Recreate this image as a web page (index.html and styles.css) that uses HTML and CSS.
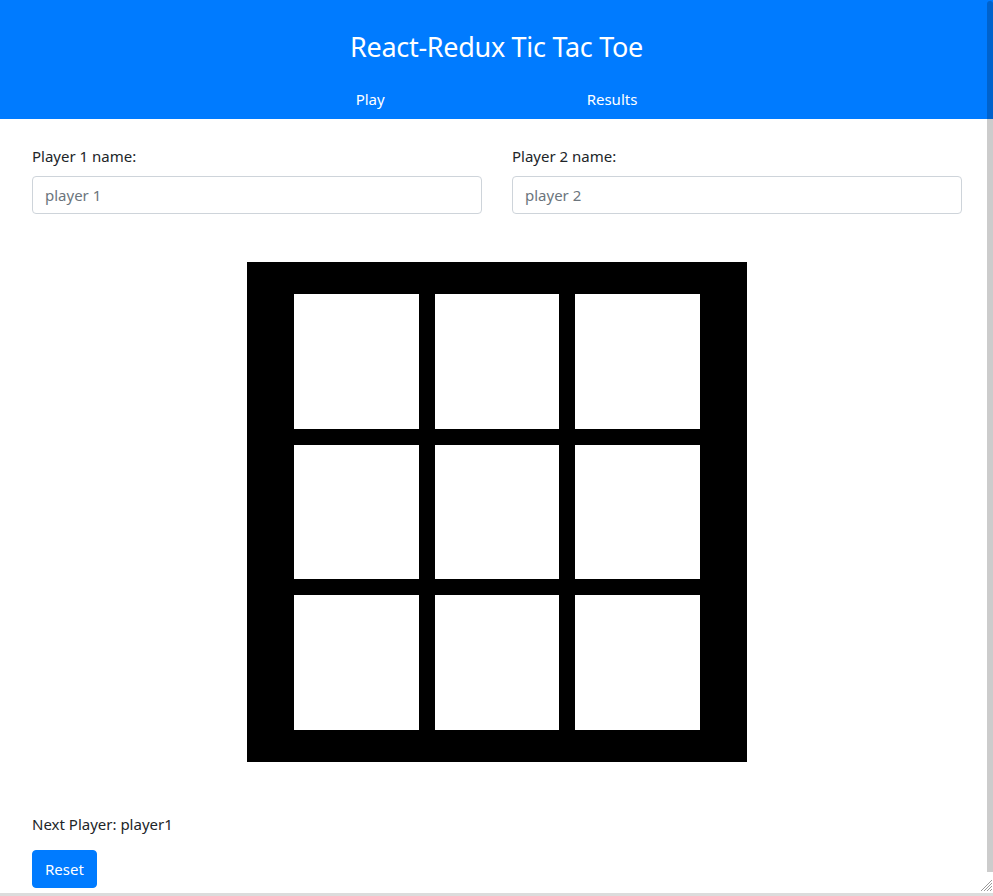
FILE: index.html
```html
<!DOCTYPE html>
<html lang="en">
<head>
<meta charset="utf-8">
<title>React-Redux Tic Tac Toe</title>
<link rel="stylesheet" href="styles.css">
</head>
<body>
<header class="app-header">
  <h1 class="app-title">React-Redux Tic Tac Toe</h1>
  <nav class="app-nav">
    <a class="nav-link" href="#">Play</a>
    <a class="nav-link" href="#">Results</a>
  </nav>
</header>
<main class="content">
  <div class="players">
    <div class="form-group">
      <label class="form-label" for="p1">Player 1 name:</label>
      <input class="form-control" id="p1" type="text" placeholder="player 1">
    </div>
    <div class="form-group">
      <label class="form-label" for="p2">Player 2 name:</label>
      <input class="form-control" id="p2" type="text" placeholder="player 2">
    </div>
  </div>
  <div class="board-wrap">
    <div class="board">
      <div class="cell"></div><div class="cell"></div><div class="cell"></div>
      <div class="cell"></div><div class="cell"></div><div class="cell"></div>
      <div class="cell"></div><div class="cell"></div><div class="cell"></div>
    </div>
  </div>
  <p class="next-player">Next Player: player1</p>
  <button class="btn-primary" type="button">Reset</button>
</main>
<div class="scroll-thumb"></div>
<div class="resize-grip">
  <svg width="12" height="12" viewBox="0 0 12 12"><path d="M11 3 L3 11 M11 6 L6 11 M11 9 L9 11 M11 0 L0 11" stroke="#9a9a9a" stroke-width="1" fill="none"/></svg>
</div>
<div class="bottom-strip"></div>
</body>
</html>
```

FILE: styles.css
```css
* { box-sizing: border-box; }
html, body { margin: 0; padding: 0; }
body {
  font-family: "Noto Sans", "Open Sans", "Liberation Sans", sans-serif;
  font-size: 16px;
  line-height: 1.5;
  color: #212529;
  background: #fff;
  overflow: hidden;
  height: 896px;
}
.app-header {
  background: #007bff;
  color: #fff;
  height: 119px;
  padding-top: 31px;
  text-align: center;
}
.app-title {
  margin: 0;
  font-size: 27px;
  font-weight: 400;
  line-height: 1.2;
  letter-spacing: -0.3px;
}
.app-nav {
  display: flex;
  justify-content: center;
  gap: 202px;
  margin-top: 24px;
}
.nav-link {
  color: #fff;
  text-decoration: none;
  font-size: 15px;
  line-height: 24px;
}
.content {
  padding: 0 31px 0 32px;
}
.players {
  display: grid;
  grid-template-columns: 1fr 1fr;
  column-gap: 30px;
  margin-top: 25px;
}
.form-group { display: flex; flex-direction: column; }
.form-label {
  font-size: 15px;
  line-height: 24px;
  margin-bottom: 8px;
}
.form-control {
  height: 38px;
  padding: 6px 12px;
  font: inherit;
  font-size: 15px;
  color: #495057;
  border: 1px solid #ced4da;
  border-radius: 4px;
  background: #fff;
}
.form-control::placeholder { color: #6c757d; }
.board-wrap {
  display: flex;
  justify-content: center;
  margin-top: 48px;
  margin-left: -32px;
  margin-right: -31px;
}
.board {
  width: 500px;
  height: 500px;
  background: #000;
  padding: 32px 47px;
  display: grid;
  grid-template-columns: 125px 124px 125px;
  grid-template-rows: 135px 134px 135px;
  gap: 16px;
}
.cell { background: #fff; }
.next-player {
  margin: 50px 0 0;
  font-size: 15px;
  line-height: 24px;
}
.btn-primary {
  margin-top: 14px;
  height: 38px;
  padding: 0 12px;
  background: #007bff;
  color: #fff;
  border: 1px solid #007bff;
  border-radius: 4px;
  font: inherit;
  font-size: 15px;
  line-height: 24px;
}
.scroll-thumb {
  position: fixed;
  right: 0;
  top: 1px;
  width: 6px;
  height: 871px;
  border-radius: 3px 3px 0 0;
  background: rgba(0, 0, 0, 0.2);
}
.resize-grip {
  position: fixed;
  right: 0;
  bottom: 4px;
  width: 12px;
  height: 12px;
  line-height: 0;
}
.bottom-strip {
  position: fixed;
  left: 0;
  right: 0;
  bottom: 0;
  height: 3px;
  background: #dcdcdc;
}
```
